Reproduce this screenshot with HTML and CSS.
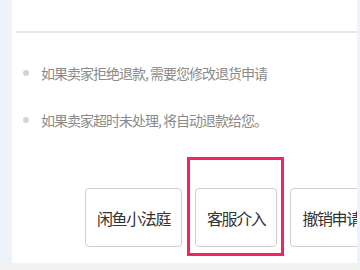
FILE: index.html
```html
<!DOCTYPE html>
<html lang="zh-CN">
<head>
    <meta charset="UTF-8" />
    <meta name="viewport" content="width=device-width, initial-scale=1" />
    <title>退款详情</title>
    <link rel="stylesheet" href="styles.css">
</head>
<body>

    <div class="page">
        <section class="card">
            <div class="card-top"></div>
            <div class="divider"></div>

            <ul class="tips">
                <li><span class="dot"></span>如果卖家拒绝退款, 需要您修改退货申请</li>
                <li><span class="dot"></span>如果卖家超时未处理, 将自动退款给您。</li>
            </ul>

            <div class="actions">
                <button class="btn">闲鱼小法庭</button>
                <button class="btn">客服介入</button>
                <button class="btn">撤销申请</button>
            </div>

            <!-- 标注框 -->
            <div class="highlight"></div>
        </section>
    </div>
    <div class="footer"></div>

</body>
</html>
```

FILE: styles.css
```css
body {
    margin: 0;
    width: 360px;
    height: 270px;
    overflow: hidden;
    background: #eef3fb;
    font-family: "Noto Sans CJK SC", "Noto Sans", sans-serif;
}
.page {
    display: flex;
    height: 263px;
}
.card {
    position: relative;
    margin-left: 12px;
    width: 345px;
    background: #fff;
    overflow: hidden;
}
.card-top {
    height: 31px;
}
.divider {
    margin-left: 4px;
    height: 2px;
    background: #e6e6e6;
}
.tips {
    list-style: none;
    margin: 30px 0 0;
    padding: 0;
}
.tips li {
    display: flex;
    align-items: center;
    height: 20px;
    line-height: 20px;
    padding-left: 11px;
    margin-bottom: 27px;
    font-size: 14px;
    letter-spacing: -1px;
    color: #8a8a8a;
    white-space: nowrap;
}
.tips li:last-child {
    margin-bottom: 0;
}
.dot {
    width: 6px;
    height: 6px;
    border-radius: 50%;
    background: #d2d2d2;
    margin-right: 12px;
    flex-shrink: 0;
}
.actions {
    display: flex;
    gap: 13px;
    margin-top: 58px;
    padding-left: 73px;
}
.btn {
    flex-shrink: 0;
    height: 59px;
    padding: 0 11px;
    border: 1px solid #cfcfcf;
    border-radius: 4px;
    background: #fff;
    font-family: inherit;
    font-size: 16px;
    letter-spacing: -1.4px;
    color: #333;
    white-space: nowrap;
}
.highlight {
    position: absolute;
    left: 175px;
    top: 157px;
    width: 91px;
    height: 93px;
    border: 3px solid #f5245c;
}
.footer {
    height: 7px;
    background: #f2f2f4;
}
```
